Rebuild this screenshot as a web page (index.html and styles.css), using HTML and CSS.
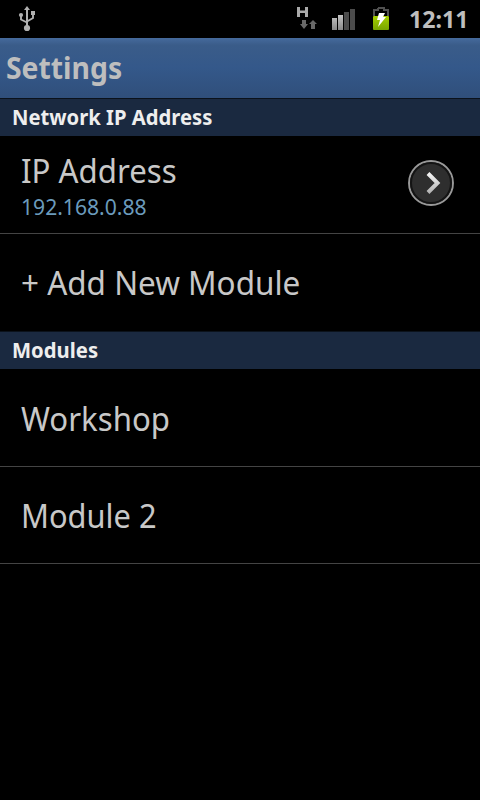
FILE: index.html
```html
<!DOCTYPE html>
<html lang="en">
<head>
<meta charset="utf-8">
<title>Settings</title>
<link rel="stylesheet" href="styles.css">
</head>
<body>
<header class="status">
  <svg class="usb" width="18" height="26" viewBox="0 0 18 26" fill="#b0b0b0">
    <path d="M9 0l3 4h-2v18H8V4H6z"/>
    <circle cx="9" cy="22" r="3.100"/>
    <circle cx="3" cy="9" r="2.100"/>
    <path d="M13 5h4v4h-4z"/>
    <path d="M3 9v4.500L9 16.500M15 8v4L9 15.500" fill="none" stroke="#b0b0b0" stroke-width="1.900"/>
  </svg>
  <svg class="data" width="22" height="24" viewBox="0 0 22 24">
    <path d="M0 1h3v3.500h5V1h3v10H8V7H3v4H0z" fill="#aaa"/>
    <path d="M5 14h4v4h2l-4 5-4-5h2zM16 14l4 4h-2v5h-4v-5h-2z" fill="#686868"/>
  </svg>
  <svg class="signal" width="24" height="22" viewBox="0 0 24 22">
    <defs><linearGradient id="bar" x2="0" y2="1"><stop stop-color="#c4c4c4"/><stop offset="1" stop-color="#888"/></linearGradient></defs>
    <path d="M0 9h5v12H0zM6 6h5v15H6z" fill="url(#bar)"/>
    <path d="M12 3h5v18h-5zM18 0h5v21h-5z" fill="#4b4b4b"/>
  </svg>
  <svg class="battery" width="18" height="24" viewBox="0 0 18 24">
    <defs><linearGradient id="charge" x2="0" y2="1"><stop stop-color="#a5cf00"/><stop offset="1" stop-color="#79a500"/></linearGradient></defs>
    <path d="M6 1h6v2h4v6M6 1v2H2v6" fill="none" stroke="#505050" stroke-width="2"/>
    <rect x="1" y="9" width="16" height="14" rx="1" fill="url(#charge)"/>
    <path d="M7 6h6l-2 4h3l-8 10 2-7H5z" fill="#fff"/>
  </svg>
  <span class="clock">12:11</span>
</header>
<h1 class="titlebar"><span class="t-settings">Settings</span></h1>
<main>
  <h2 class="section"><span class="t-network">Network IP Address</span></h2>
  <div class="row">
    <div class="labels">
      <div class="label"><span class="t-ip">IP Address</span></div>
      <div class="sub"><span class="t-num">192.168.0.88</span></div>
    </div>
    <svg class="more" width="48" height="48" viewBox="0 0 48 48">
      <defs><linearGradient id="chev" x2="0" y2="1"><stop stop-color="#f4f4f4"/><stop offset="1" stop-color="#b4b4b4"/></linearGradient></defs>
      <circle cx="24" cy="24" r="22" fill="#2e2e2e" stroke="#999" stroke-width="1.900"/>
      <circle cx="24" cy="24" r="20" fill="none" stroke="#141414" stroke-width="2"/>
      <path d="M21 14.500L30.500 24L21 33.500" fill="none" stroke="url(#chev)" stroke-width="4"/>
    </svg>
  </div>
  <div class="row last"><div class="label"><span class="t-add">+ Add New Module</span></div></div>
  <h2 class="section"><span class="t-modules">Modules</span></h2>
  <div class="row"><div class="label"><span class="t-work">Workshop</span></div></div>
  <div class="row second"><div class="label"><span class="t-mod">Module 2</span></div></div>
</main>
</body>
</html>
```
FILE: styles.css
```css
* { box-sizing: border-box; }
body { margin: 0; height: 800px; background: #000; color: #c8c8c8; font-family: "Noto Sans", "Open Sans", sans-serif; overflow: hidden; }
h1, h2 { margin: 0; font-weight: 700; }
span { display: inline-block; transform-origin: 0 50%; white-space: nowrap; }
.status { height: 38px; display: flex; align-items: flex-start; padding-left: 18px; }
.usb { margin-top: 6px; }
.data { margin: 6px 0 0 261px; }
.signal { margin: 9px 0 0 13px; }
.battery { margin: 7px 0 0 16px; }
.clock { margin: 0 0 0 19px; font-size: 24px; line-height: 38px; font-weight: 700; color: #bebebe; transform: scaleX(.965); }
.titlebar { height: 60px; padding-left: 6px; font-size: 31px; line-height: 58px; color: #bebebe; background: linear-gradient(#456a9c, #3a5c89 12%, #34588a 50%, #304f7b); }
.section { height: 38px; padding-left: 12px; font-size: 21px; line-height: 37px; color: #eee; background: #1a2940; border-top: 1px solid #0b121b; }
.row { height: 98px; display: flex; align-items: center; justify-content: space-between; padding: 0 25px 0 21px; border-bottom: 1px solid #444; }
.last { height: 97px; border: 0; padding-bottom: 2px; }
.second { height: 97px; padding-bottom: 2px; }
.label { font-size: 33.500px; line-height: 44px; padding-top: 1px; }
.labels { padding-bottom: 2px; }
.labels .label { padding: 0 0 1px; }
.sub { font-size: 22.500px; line-height: 27px; color: #6b9bbc; }
.more { margin: 0 .4px 4px 0; }
.t-settings { transform: scaleX(.914); }
.t-network { transform: scaleX(.963); }
.t-modules { transform: scaleX(.965); }
.t-ip { transform: scaleX(.932); }
.t-num { transform: scaleX(.938); }
.t-add { transform: scaleX(.939); }
.t-work { transform: scaleX(.93); }
.t-mod { transform: scaleX(.92); }
```
